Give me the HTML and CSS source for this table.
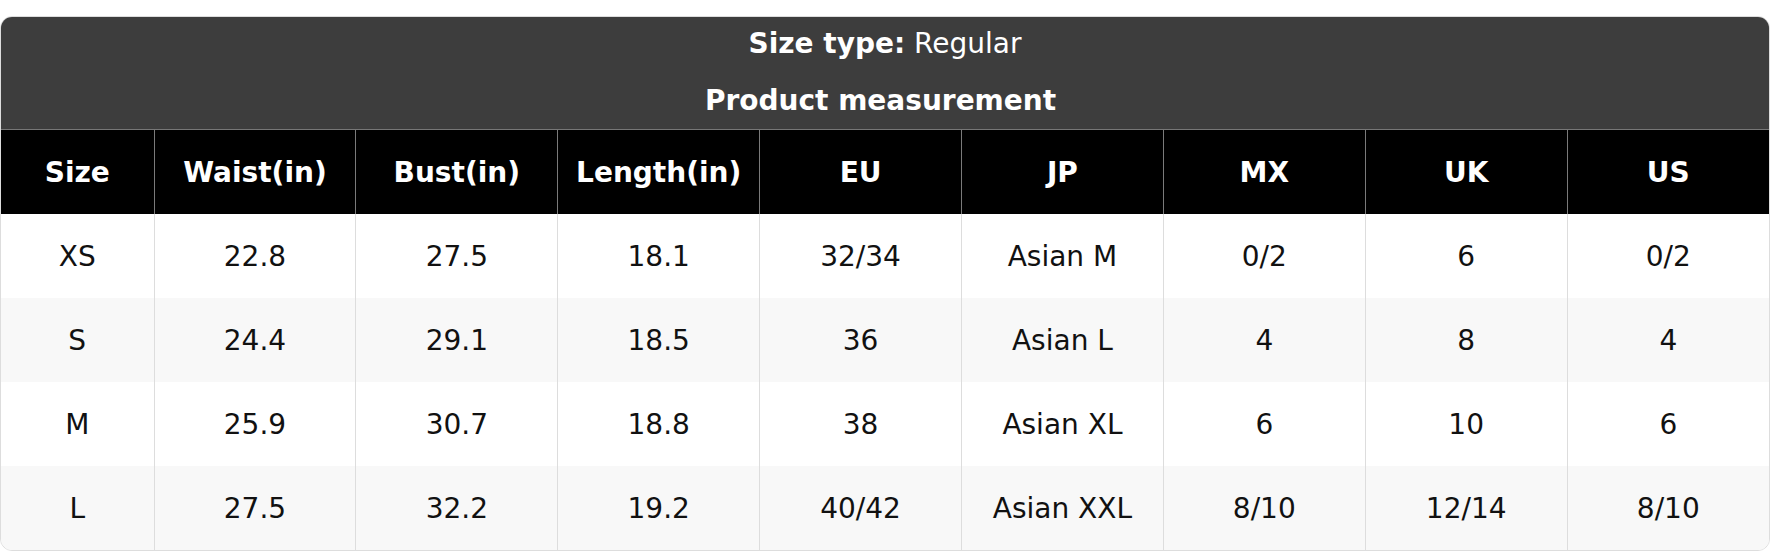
FILE: index.html
```html
<!DOCTYPE html>
<html lang="en">
<head>
<meta charset="utf-8">
<title>Size chart</title>
<link rel="stylesheet" href="styles.css">
</head>
<body>
<div class="card">
  <div class="caption">
    <div class="caption-line"><strong>Size type:</strong> Regular</div>
    <div class="caption-line caption-sub"><strong>Product measurement</strong></div>
  </div>
  <table class="chart">
    <colgroup>
      <col class="col-size">
      <col><col><col><col><col><col><col><col>
    </colgroup>
    <thead>
      <tr>
        <th>Size</th><th>Waist(in)</th><th>Bust(in)</th><th>Length(in)</th><th>EU</th><th>JP</th><th>MX</th><th>UK</th><th>US</th>
      </tr>
    </thead>
    <tbody>
      <tr><td>XS</td><td>22.8</td><td>27.5</td><td>18.1</td><td>32/34</td><td>Asian M</td><td>0/2</td><td>6</td><td>0/2</td></tr>
      <tr><td>S</td><td>24.4</td><td>29.1</td><td>18.5</td><td>36</td><td>Asian L</td><td>4</td><td>8</td><td>4</td></tr>
      <tr><td>M</td><td>25.9</td><td>30.7</td><td>18.8</td><td>38</td><td>Asian XL</td><td>6</td><td>10</td><td>6</td></tr>
      <tr><td>L</td><td>27.5</td><td>32.2</td><td>19.2</td><td>40/42</td><td>Asian XXL</td><td>8/10</td><td>12/14</td><td>8/10</td></tr>
    </tbody>
  </table>
</div>
</body>
</html>
```

FILE: styles.css
```css
html, body {
  margin: 0;
  padding: 0;
  background: #ffffff;
}

body {
  padding-top: 16px;
  font-family: "DejaVu Sans", "Liberation Sans", sans-serif;
  font-size: 28px;
  color: #111111;
}

.card {
  border: 1px solid #dddddd;
  border-radius: 12px;
  overflow: hidden;
  background: #ffffff;
}

.caption {
  background: #3d3d3d;
  color: #ffffff;
  text-align: center;
}

.caption-line {
  height: 56px;
  line-height: 56px;
}

.caption-line:first-child {
  line-height: 54px;
}

.caption-sub {
  padding-right: 9px;
}

.chart {
  width: 100%;
  border-collapse: collapse;
  table-layout: fixed;
}

.col-size {
  width: 153px;
}

.chart th,
.chart td {
  height: 84px;
  padding: 0;
  text-align: center;
  vertical-align: middle;
}

.chart th {
  background: #000000;
  color: #ffffff;
  font-weight: bold;
  border-top: 1px solid #777777;
  border-left: 1px solid #7a7a7a;
}

.chart td {
  border-left: 1px solid #dddddd;
}

.chart th:first-child,
.chart td:first-child {
  border-left: none;
}

.chart tbody tr:nth-child(even) td {
  background: #f8f8f8;
}
```
